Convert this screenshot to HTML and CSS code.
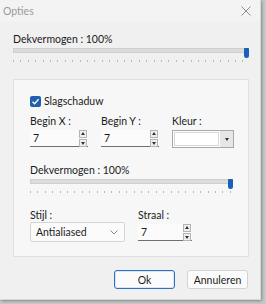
FILE: index.html
```html
<!DOCTYPE html>
<html lang="nl">
<head>
    <meta charset="UTF-8">
    <title>Opties</title>
    <link rel="stylesheet" href="styles.css">
</head>
<body>
<div class="window">
    <div class="titlebar">
        <span class="title">Opties</span>
        <svg class="close" width="10" height="10" viewBox="0 0 10 10">
            <path d="M0.5 0.5 L9.5 9.5 M9.5 0.5 L0.5 9.5" stroke="#8c8c8c" stroke-width="1" fill="none"/>
        </svg>
    </div>
    <div class="content">
        <div class="label">Dekvermogen : 100%</div>
        <div class="slider wide">
            <div class="track"></div>
            <div class="thumb"></div>
            <div class="ticks"></div>
        </div>

        <div class="group">
            <label class="check">
                <span class="box">
                    <svg width="9" height="9" viewBox="0 0 9 9">
                        <path d="M1.5 4.8 L3.6 6.8 L7.6 2.2" stroke="#fff" stroke-width="1.3" fill="none"/>
                    </svg>
                </span>
                Slagschaduw
            </label>

            <div class="row">
                <div class="field">
                    <div class="label">Begin X :</div>
                    <div class="spin">
                        <span class="val">7</span>
                        <span class="arrows"><i class="up"></i><i class="down"></i></span>
                    </div>
                </div>
                <div class="field">
                    <div class="label">Begin Y :</div>
                    <div class="spin">
                        <span class="val">7</span>
                        <span class="arrows"><i class="up"></i><i class="down"></i></span>
                    </div>
                </div>
                <div class="field">
                    <div class="label">Kleur :</div>
                    <div class="colour">
                        <span class="swatch"></span>
                        <span class="drop"><i class="down"></i></span>
                    </div>
                </div>
            </div>

            <div class="label opacity">Dekvermogen : 100%</div>
            <div class="slider narrow">
                <div class="track"></div>
                <div class="thumb"></div>
                <div class="ticks"></div>
            </div>

            <div class="row bottom">
                <div class="field">
                    <div class="label">Stijl :</div>
                    <div class="select">
                        <span>Antialiased</span>
                        <svg width="8" height="5" viewBox="0 0 8 5">
                            <path d="M0.5 0.5 L4 4 L7.5 0.5" stroke="#8a8a8a" stroke-width="1" fill="none"/>
                        </svg>
                    </div>
                </div>
                <div class="field">
                    <div class="label">Straal :</div>
                    <div class="spin">
                        <span class="val">7</span>
                        <span class="arrows"><i class="up"></i><i class="down"></i></span>
                    </div>
                </div>
            </div>
        </div>

        <div class="buttons">
            <button class="btn default">Ok</button>
            <button class="btn">Annuleren</button>
        </div>
    </div>
</div>
</body>
</html>
```

FILE: styles.css
```css
body, html {
    margin: 0;
    padding: 0;
    width: 100%;
    height: 100%;
    background-color: #c9c9c9;
    font-family: Lato, "Noto Sans", sans-serif;
    font-size: 10.5px;
    color: #1b1b1b;
    overflow: hidden;
}

.window {
    width: 260px;
    height: 299px;
    background-color: #f0f0f0;
    border-right: 1px solid #d8d8d8;
    border-bottom: 1px solid #d8d8d8;
    box-shadow: 1px 1px 3px rgba(0, 0, 0, 0.35);
}

.titlebar {
    height: 22px;
    display: flex;
    align-items: center;
    justify-content: space-between;
    padding: 0 9px 0 3px;
    background-color: #f3f3f3;
}

.title {
    color: #9a9a9a;
    font-size: 10.5px;
}

.content {
    padding: 10px 12px 0 13px;
}

.label {
    height: 14px;
    line-height: 14px;
    white-space: nowrap;
}

/* sliders */
.slider {
    position: relative;
    height: 18px;
}

.track {
    margin-top: 2px;
    height: 3px;
    background-color: #dcdcdc;
    border: 1px solid #cfcfcf;
}

.thumb {
    position: absolute;
    right: 0;
    top: 0;
    width: 5px;
    height: 10px;
    background-color: #1c5fb8;
    border-radius: 1px 1px 3px 3px;
}

.ticks {
    margin-top: 7px;
    height: 2px;
    background: repeating-linear-gradient(to right, #b8b8b8 0 1px, transparent 1px 7.4px);
}

.slider.wide {
    width: 236px;
}

.slider.narrow {
    width: 203px;
}

/* group box */
.group {
    margin-top: 13px;
    width: 236px;
    height: 178px;
    box-sizing: border-box;
    padding: 15px 0 0 16px;
    background-color: #f7f7f7;
    border: 1px solid #e0e0e0;
}

.check {
    display: flex;
    align-items: center;
    gap: 3px;
    height: 12px;
    line-height: 12px;
}

.box {
    width: 11px;
    height: 11px;
    border-radius: 2px;
    background-color: #1f5fae;
    display: flex;
    align-items: center;
    justify-content: center;
}

.row {
    display: flex;
    gap: 13px;
    margin-top: 7px;
}

.row.bottom {
    margin-top: 11px;
    gap: 13px;
}

.field .label {
    margin-bottom: 2px;
}

.row.bottom .field .label {
    margin-bottom: 0;
}

.spin {
    width: 58px;
    height: 17px;
    display: flex;
    align-items: center;
    justify-content: space-between;
    background-color: #fbfbfb;
    border-bottom: 1px solid #6f6f6f;
    box-sizing: border-box;
}

.val {
    padding-left: 3px;
}

.arrows {
    display: flex;
    flex-direction: column;
    gap: 1px;
    margin-right: 1px;
}

.arrows i, .drop i {
    display: block;
    width: 6px;
    height: 6px;
    border: 1px solid #b4b4b4;
    background-color: #efefef;
    position: relative;
}

.arrows i::after, .drop i::after {
    content: "";
    position: absolute;
    left: 1px;
    border-left: 2px solid transparent;
    border-right: 2px solid transparent;
}

.up::after {
    top: 1px;
    border-bottom: 3px solid #333;
}

.down::after {
    top: 2px;
    border-top: 3px solid #333;
}

.colour {
    width: 62px;
    height: 18px;
    display: flex;
    border: 1px solid #a8a8a8;
    box-sizing: border-box;
    background-color: #fff;
}

.swatch {
    flex: 1;
    margin: 1px;
    border: 1px solid #d8d8d8;
}

.drop {
    width: 13px;
    display: flex;
    align-items: center;
    justify-content: center;
    background-color: #e6e6e6;
}

.drop i {
    border: none;
    background: none;
}

.label.opacity {
    margin-top: 15px;
}

.select {
    width: 95px;
    height: 20px;
    box-sizing: border-box;
    display: flex;
    align-items: center;
    justify-content: space-between;
    padding: 0 6px 0 5px;
    background-color: #fbfbfb;
    border: 1px solid #d6d6d6;
    border-radius: 2px;
}

.row.bottom .spin {
    width: 54px;
    margin-top: 2px;
}

/* dialog buttons */
.buttons {
    display: flex;
    justify-content: flex-end;
    gap: 12px;
    margin-top: 13px;
}

.btn {
    font-family: inherit;
    font-size: 10.5px;
    color: #1b1b1b;
    height: 19px;
    padding: 0;
    background-color: #fbfbfb;
    border: 1px solid #d3d3d3;
    border-radius: 3px;
    width: 61px;
}

.btn.default {
    border: 1px solid #2f6fc0;
    box-shadow: inset 0 0 0 1px #dbe6f4;
}
```
